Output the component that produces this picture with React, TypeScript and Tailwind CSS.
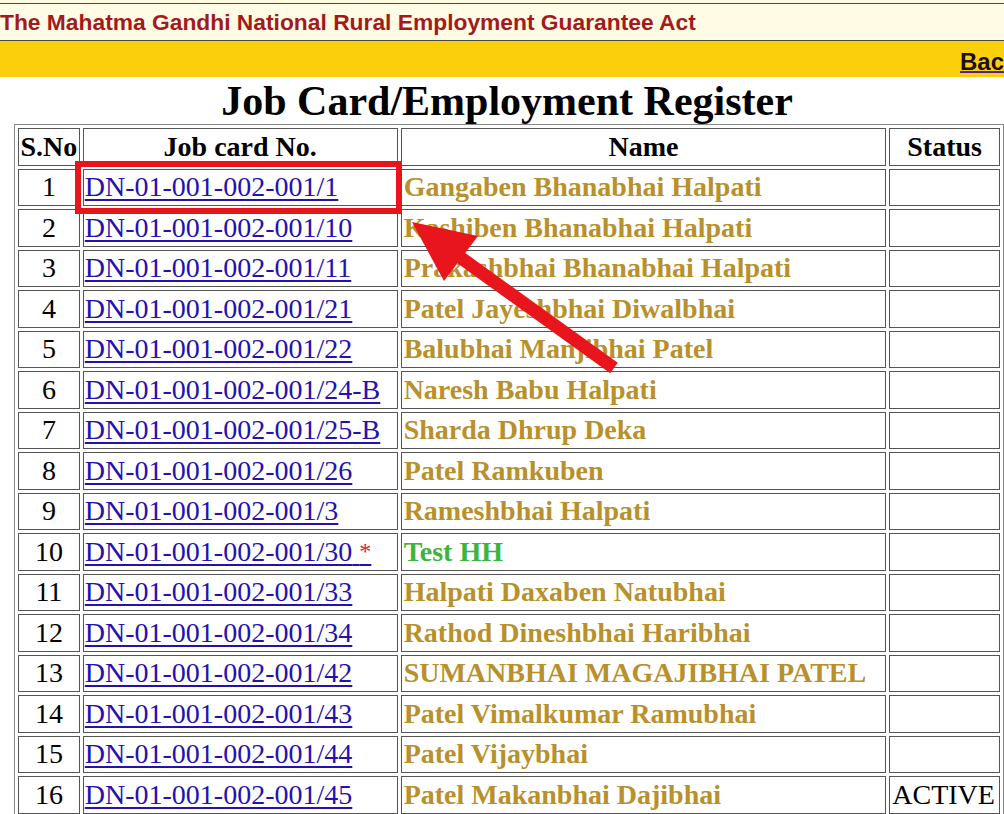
const ROWS: { no: number; card: string; name: string; star?: boolean; green?: boolean; status?: string }[] = [
  { no: 1, card: "DN-01-001-002-001/1", name: "Gangaben Bhanabhai Halpati" },
  { no: 2, card: "DN-01-001-002-001/10", name: "Kashiben Bhanabhai Halpati" },
  { no: 3, card: "DN-01-001-002-001/11", name: "Prakashbhai Bhanabhai Halpati" },
  { no: 4, card: "DN-01-001-002-001/21", name: "Patel Jayeshbhai Diwalbhai" },
  { no: 5, card: "DN-01-001-002-001/22", name: "Balubhai Manjibhai Patel" },
  { no: 6, card: "DN-01-001-002-001/24-B", name: "Naresh Babu Halpati" },
  { no: 7, card: "DN-01-001-002-001/25-B", name: "Sharda Dhrup Deka" },
  { no: 8, card: "DN-01-001-002-001/26", name: "Patel Ramkuben" },
  { no: 9, card: "DN-01-001-002-001/3", name: "Rameshbhai Halpati" },
  { no: 10, card: "DN-01-001-002-001/30", name: "Test HH", star: true, green: true },
  { no: 11, card: "DN-01-001-002-001/33", name: "Halpati Daxaben Natubhai" },
  { no: 12, card: "DN-01-001-002-001/34", name: "Rathod Dineshbhai Haribhai" },
  { no: 13, card: "DN-01-001-002-001/42", name: "SUMANBHAI MAGAJIBHAI PATEL" },
  { no: 14, card: "DN-01-001-002-001/43", name: "Patel Vimalkumar Ramubhai" },
  { no: 15, card: "DN-01-001-002-001/44", name: "Patel Vijaybhai" },
  { no: 16, card: "DN-01-001-002-001/45", name: "Patel Makanbhai Dajibhai", status: "ACTIVE" },
];

const cell = "border-[1.6px] border-[#555] h-[37.5px] p-0 leading-none align-middle";

export default function App() {
  return (
    <div className="relative h-[814px] w-[1004px] overflow-hidden bg-white font-['Liberation_Serif','Times_New_Roman',serif]">
      {/* header bands */}
      <div className="h-[3px] bg-[#fffbe0]" />
      <div className="flex h-[38px] items-center border-y-[1.5px] border-[#4a4a3a] bg-[#fffbe4]">
        <p className="font-['Liberation_Sans',Arial,sans-serif] text-[22.8px] font-bold text-[#a31a1c]">
          The Mahatma Gandhi National Rural Employment Guarantee Act
        </p>
      </div>
      <div className="flex h-[36px] items-center justify-end overflow-hidden bg-[#fbcf0c]">
        <a className="mt-[5px] font-['Liberation_Sans',Arial,sans-serif] text-[24px] font-bold whitespace-nowrap text-[#1a0f1a] underline decoration-[#4a2090] decoration-2">
          Bac
        </a>
      </div>

      <h1 className="mt-[2px] pl-[10px] text-center text-[42px] leading-[45px] font-bold text-black">
        Job Card/Employment Register
      </h1>

      <table className="ml-[14px] table-fixed border-separate border-spacing-[3px] border border-[#888] text-[28px]">
        <colgroup>
          <col className="w-[62px]" />
          <col className="w-[316px]" />
          <col className="w-[487px]" />
          <col className="w-[111px]" />
        </colgroup>
        <thead>
          <tr>
            <th className={cell + " text-center font-bold"}>S.No</th>
            <th className={cell + " text-center font-bold"}>Job card No.</th>
            <th className={cell + " text-center font-bold"}>Name</th>
            <th className={cell + " text-center font-bold"}>Status</th>
          </tr>
        </thead>
        <tbody>
          {ROWS.map(r => (
            <tr key={r.no}>
              <td className={cell + " text-center"}>{r.no}</td>
              <td className={cell + " pl-[1px] whitespace-nowrap"}>
                <a className="text-[#2412b0] underline decoration-[1.5px] underline-offset-[3px]">
                  {r.card}
                  {r.star && (
                    <>
                      {" "}
                      <span className="relative -top-[2px] text-[24px] text-[#e0202a]">*</span>
                    </>
                  )}
                </a>
              </td>
              <td
                className={
                  cell +
                  " pl-[2px] font-bold whitespace-nowrap " +
                  (r.green ? "text-[#3cb53c]" : "text-[#b8902c]")
                }
              >
                {r.name}
              </td>
              <td className={cell + " pl-[2px] whitespace-nowrap"}>{r.status}</td>
            </tr>
          ))}
        </tbody>
      </table>

      {/* annotation overlay */}
      <svg className="pointer-events-none absolute inset-0" width="1004" height="814" viewBox="0 0 1004 814">
        <rect x="78" y="164" width="321" height="47" fill="none" stroke="#e8161c" strokeWidth="6" />
        <line x1="450" y1="250" x2="614" y2="368" stroke="#e8161c" strokeWidth="13" />
        <polygon points="412,222 478,236 444,281" fill="#e8161c" />
      </svg>
    </div>
  );
}
